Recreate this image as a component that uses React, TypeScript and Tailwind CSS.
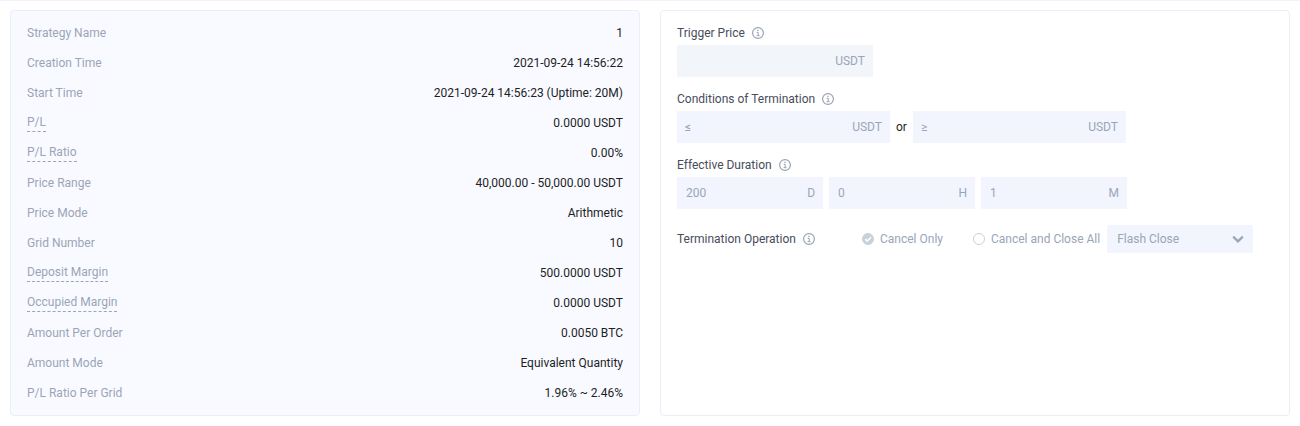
import { useId, useState } from "react";
import type { ReactNode } from "react";
import clsx from "clsx";

type Detail = {
  label: string;
  value: string;
  hint?: boolean;
};

const details: Detail[] = [
  { label: "Strategy Name", value: "1" },
  { label: "Creation Time", value: "2021-09-24 14:56:22" },
  { label: "Start Time", value: "2021-09-24 14:56:23 (Uptime: 20M)" },
  { label: "P/L", value: "0.0000 USDT", hint: true },
  { label: "P/L Ratio", value: "0.00%", hint: true },
  { label: "Price Range", value: "40,000.00 - 50,000.00 USDT" },
  { label: "Price Mode", value: "Arithmetic" },
  { label: "Grid Number", value: "10" },
  { label: "Deposit Margin", value: "500.0000 USDT", hint: true },
  { label: "Occupied Margin", value: "0.0000 USDT", hint: true },
  { label: "Amount Per Order", value: "0.0050 BTC" },
  { label: "Amount Mode", value: "Equivalent Quantity" },
  { label: "P/L Ratio Per Grid", value: "1.96% ~ 2.46%" },
];

/* ── Icons ───────────────────────────────────────────────────────── */

function InfoIcon() {
  return (
    <svg
      className="h-3 w-3 shrink-0 text-[#98a3b6]"
      viewBox="0 0 12 12"
      fill="none"
      stroke="currentColor"
      aria-hidden="true"
    >
      <circle cx="6" cy="6" r="5.4" strokeWidth="1.2" />
      <path d="M4.7 5.4h1.5v3.2M4.6 8.7h3" strokeWidth="1" />
      <rect x="5.3" y="2.8" width="1.3" height="1.3" fill="currentColor" stroke="none" />
    </svg>
  );
}

function ChevronIcon() {
  return (
    <svg
      className="pointer-events-none absolute top-1/2 right-[9px] h-3 w-3 -translate-y-1/2 text-[#9aa5b8]"
      viewBox="0 0 12 12"
      fill="none"
      stroke="currentColor"
      aria-hidden="true"
    >
      <path d="M1.2 3.6 6 8.4l4.8-4.8" strokeWidth="2.2" />
    </svg>
  );
}

/* ── Form parts ──────────────────────────────────────────────────── */

function FieldTitle({ children }: { children: ReactNode }) {
  return (
    <div className="flex h-6 items-center gap-[7px] text-[#474d5c]">
      {children}
      <InfoIcon />
    </div>
  );
}

type UnitInputProps = {
  name: string;
  unit: string;
  id?: string;
  value?: string;
  prefix?: string;
  className: string;
};

function UnitInput({ name, unit, id, value, prefix, className }: UnitInputProps) {
  return (
    <label className={clsx("flex h-8 items-center px-2 text-[#9aa5b8]", className)}>
      {prefix && <span className="pr-1">{prefix}</span>}
      <input
        id={id}
        type="text"
        aria-label={name}
        defaultValue={value}
        disabled
        className="w-full min-w-0 flex-1 bg-transparent px-px outline-none"
      />
      <span>{unit}</span>
    </label>
  );
}

type RadioProps = {
  label: string;
  name: string;
  checked: boolean;
  onSelect: () => void;
};

function Radio({ label, name, checked, onSelect }: RadioProps) {
  return (
    <label className="flex items-center gap-1.5 whitespace-nowrap text-[#9aa5b8]">
      <span className="grid h-3 w-3">
        <input
          type="radio"
          name={name}
          checked={checked}
          onChange={onSelect}
          className="col-start-1 row-start-1 h-3 w-3 appearance-none rounded-full border border-[#c9d1da] checked:bg-[#c9d1da]"
        />
        {checked && (
          <svg
            className="pointer-events-none col-start-1 row-start-1 h-3 w-3"
            viewBox="0 0 12 12"
            fill="none"
            stroke="#fff"
            aria-hidden="true"
          >
            <path d="m3.2 6.1 2 2 3.7-3.8" strokeWidth="1.5" />
          </svg>
        )}
      </span>
      {label}
    </label>
  );
}

/* ── Panels ──────────────────────────────────────────────────────── */

function DetailsPanel() {
  return (
    <dl className="flex-1 rounded border border-[#eaeff7] bg-[#f9faff] px-4 py-[7px]">
      {details.map(({ label, value, hint }) => (
        <div key={label} className="flex h-[30px] items-center justify-between">
          <dt
            className={clsx(
              "text-[#9aa5b8]",
              hint && "border-b border-dashed border-[#9aa5b8] pb-px",
            )}
          >
            {label}
          </dt>
          <dd className="text-[#1c1f26]">{value}</dd>
        </div>
      ))}
    </dl>
  );
}

function SettingsPanel() {
  const triggerId = useId();
  const [operation, setOperation] = useState("cancel");

  return (
    <form className="flex flex-1 flex-col gap-2.5 rounded border border-[#eaeff7] bg-white px-4 py-2.5">
      <div>
        <FieldTitle>
          <label htmlFor={triggerId}>Trigger Price</label>
        </FieldTitle>
        <UnitInput
          id={triggerId}
          name="Trigger Price"
          unit="USDT"
          className="w-[196px] bg-[#f2f5fa]"
        />
      </div>

      <fieldset>
        <FieldTitle>Conditions of Termination</FieldTitle>
        <div className="flex items-center gap-1.5">
          <UnitInput name="Lower price" prefix="≤" unit="USDT" className="w-[213px] bg-[#f2f5fd]" />
          <span className="text-[#1c1f26]">or</span>
          <UnitInput name="Upper price" prefix="≥" unit="USDT" className="w-[213px] bg-[#f2f5fd]" />
        </div>
      </fieldset>

      <fieldset>
        <FieldTitle>Effective Duration</FieldTitle>
        <div className="flex gap-1.5">
          <UnitInput name="Days" value="200" unit="D" className="w-[146px] bg-[#f2f5fd]" />
          <UnitInput name="Hours" value="0" unit="H" className="w-[146px] bg-[#f2f5fd]" />
          <UnitInput name="Minutes" value="1" unit="M" className="w-[146px] bg-[#f2f5fd]" />
        </div>
      </fieldset>

      <fieldset className="pt-1.5">
        <div className="flex h-7 items-center">
          <div className="w-[185px]">
            <FieldTitle>Termination Operation</FieldTitle>
          </div>
          <div className="flex gap-[30px]">
            <Radio
              label="Cancel Only"
              name="operation"
              checked={operation === "cancel"}
              onSelect={() => setOperation("cancel")}
            />
            <Radio
              label="Cancel and Close All"
              name="operation"
              checked={operation === "close"}
              onSelect={() => setOperation("close")}
            />
          </div>
          <div className="relative ml-[7px]">
            <select
              aria-label="Close type"
              className="h-7 w-[146px] appearance-none rounded-xs bg-[#f2f5fd] px-2.5 text-[#9aa5b8] outline-none"
            >
              <option>Flash Close</option>
              <option>Limit Close</option>
            </select>
            <ChevronIcon />
          </div>
        </div>
      </fieldset>
    </form>
  );
}

export default function App() {
  return (
    <main className="border-t border-[#f7f0f7] bg-white px-2.5 pt-[9px] pb-2.5 font-['Roboto',sans-serif] text-xs">
      <div className="flex gap-5">
        <DetailsPanel />
        <SettingsPanel />
      </div>
    </main>
  );
}
